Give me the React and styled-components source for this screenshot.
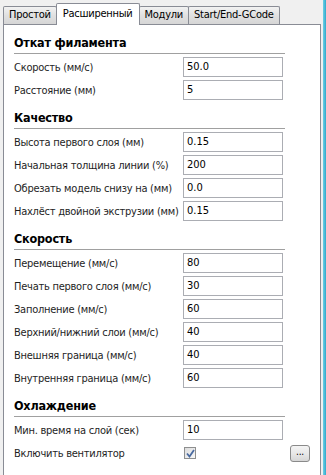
import styled, { createGlobalStyle } from 'styled-components';

const GlobalStyle = createGlobalStyle`
  html, body {
    margin: 0;
    padding: 0;
    background: #f0f0f0;
  }
  body {
    font-family: "DejaVu Sans Condensed", Tahoma, "Liberation Sans", sans-serif;
    font-size: 11px;
    letter-spacing: -0.25px;
    color: #1a1a1a;
  }
`;

const Window = styled.div`
  display: flex;
  height: 475px;
  width: 326px;
  overflow: hidden;
`;

const Main = styled.div`
  flex: 1;
  display: flex;
  flex-direction: column;
  padding: 0 2px 0 3px;
`;

const Edge = styled.div`
  width: 3px;
  background: linear-gradient(to right, #6fcfe4, #2fa9cc);
`;

const TabBar = styled.div`
  display: flex;
  align-items: flex-end;
  height: 24px;
`;

const Tab = styled.div`
  position: relative;
  height: ${p => (p.$active ? '21px' : '17px')};
  line-height: ${p => (p.$active ? '19px' : '16px')};
  padding: 0 ${p => (p.$active ? '6px' : '5px')};
  margin-left: -1px;
  margin-bottom: ${p => (p.$active ? '-1px' : '0')};
  border: 1px solid #898c95;
  border-bottom: none;
  border-radius: 2px 2px 0 0;
  background: ${p => (p.$active ? '#ffffff' : 'linear-gradient(#f2f2f2, #e0e0e0 50%, #d6d6d6)')};
  z-index: ${p => (p.$active ? 1 : 0)};
  color: #000;
  white-space: nowrap;
  &:first-child {
    margin-left: 0;
  }
`;

const Panel = styled.div`
  flex: 1;
  background: #ffffff;
  border: 1px solid #898c95;
  border-bottom: none;
  padding: 0 0 0 10px;
`;

const Section = styled.div`
  display: flex;
  flex-direction: column;
  gap: 3px;
  width: 296px;
`;

const Title = styled.div`
  width: 271px;
  padding: 10px 0 2px;
  line-height: 16px;
  font-size: 12.5px;
  font-weight: bold;
  letter-spacing: -0.2px;
  color: #000;
  border-bottom: 1px solid #a0a0a0;
`;

const Row = styled.div`
  display: grid;
  grid-template-columns: 169px 100px 27px;
  align-items: center;
  height: 20px;
`;

const Label = styled.span`
  white-space: nowrap;
  color: #1e1e1e;
`;

const Field = styled.div`
  box-sizing: border-box;
  height: 20px;
  border: 1px solid #abadb3;
  background: #fff;
  padding: 0 3px;
  line-height: 18px;
  letter-spacing: 0;
  color: #000;
`;

const Check = styled.span`
  box-sizing: border-box;
  width: 12px;
  height: 12px;
  border: 1px solid #8e8f8f;
  background: linear-gradient(135deg, #dcdcdc, #f8f8f8);
  display: flex;
  align-items: center;
  justify-content: center;
  margin-left: 1px;
`;

const DotsButton = styled.div`
  box-sizing: border-box;
  justify-self: end;
  width: 20px;
  height: 17px;
  border: 1px solid #8a8a8a;
  border-radius: 3px;
  background: linear-gradient(#f4f4f4, #e8e8e8 50%, #d6d6d6);
  display: flex;
  align-items: center;
  justify-content: center;
  font-size: 10px;
  line-height: 10px;
  padding-bottom: 3px;
  color: #000;
`;

const sections = [
  {
    title: 'Откат филамента',
    rows: [
      ['Скорость (мм/с)', '50.0'],
      ['Расстояние (мм)', '5'],
    ],
  },
  {
    title: 'Качество',
    rows: [
      ['Высота первого слоя (мм)', '0.15'],
      ['Начальная толщина линии (%)', '200'],
      ['Обрезать модель снизу на (мм)', '0.0'],
      ['Нахлёст двойной экструзии (мм)', '0.15'],
    ],
  },
  {
    title: 'Скорость',
    rows: [
      ['Перемещение (мм/с)', '80'],
      ['Печать первого слоя (мм/с)', '30'],
      ['Заполнение (мм/с)', '60'],
      ['Верхний/нижний слои (мм/с)', '40'],
      ['Внешняя граница (мм/с)', '40'],
      ['Внутренняя граница (мм/с)', '60'],
    ],
  },
];

const tabs = ['Простой', 'Расширенный', 'Модули', 'Start/End-GCode'];

export default function App() {
  return (
    <Window>
      <GlobalStyle />
      <Main>
        <TabBar>
          {tabs.map(t => (
            <Tab key={t} $active={t === 'Расширенный'}>{t}</Tab>
          ))}
        </TabBar>
        <Panel>
          {sections.map(s => (
            <Section key={s.title}>
              <Title>{s.title}</Title>
              {s.rows.map(([label, value]) => (
                <Row key={label}>
                  <Label>{label}</Label>
                  <Field>{value}</Field>
                </Row>
              ))}
            </Section>
          ))}
          <Section>
            <Title>Охлаждение</Title>
            <Row>
              <Label>Мин. время на слой (сек)</Label>
              <Field>10</Field>
            </Row>
            <Row>
              <Label>Включить вентилятор</Label>
              <Check>
                <svg width="9" height="9" viewBox="0 0 9 9">
                  <path d="M1 4.5 L3.5 7.5 L8 1" fill="none" stroke="#4a6aa0" strokeWidth="1.8" />
                </svg>
              </Check>
              <DotsButton>...</DotsButton>
            </Row>
          </Section>
        </Panel>
      </Main>
      <Edge />
    </Window>
  );
}
